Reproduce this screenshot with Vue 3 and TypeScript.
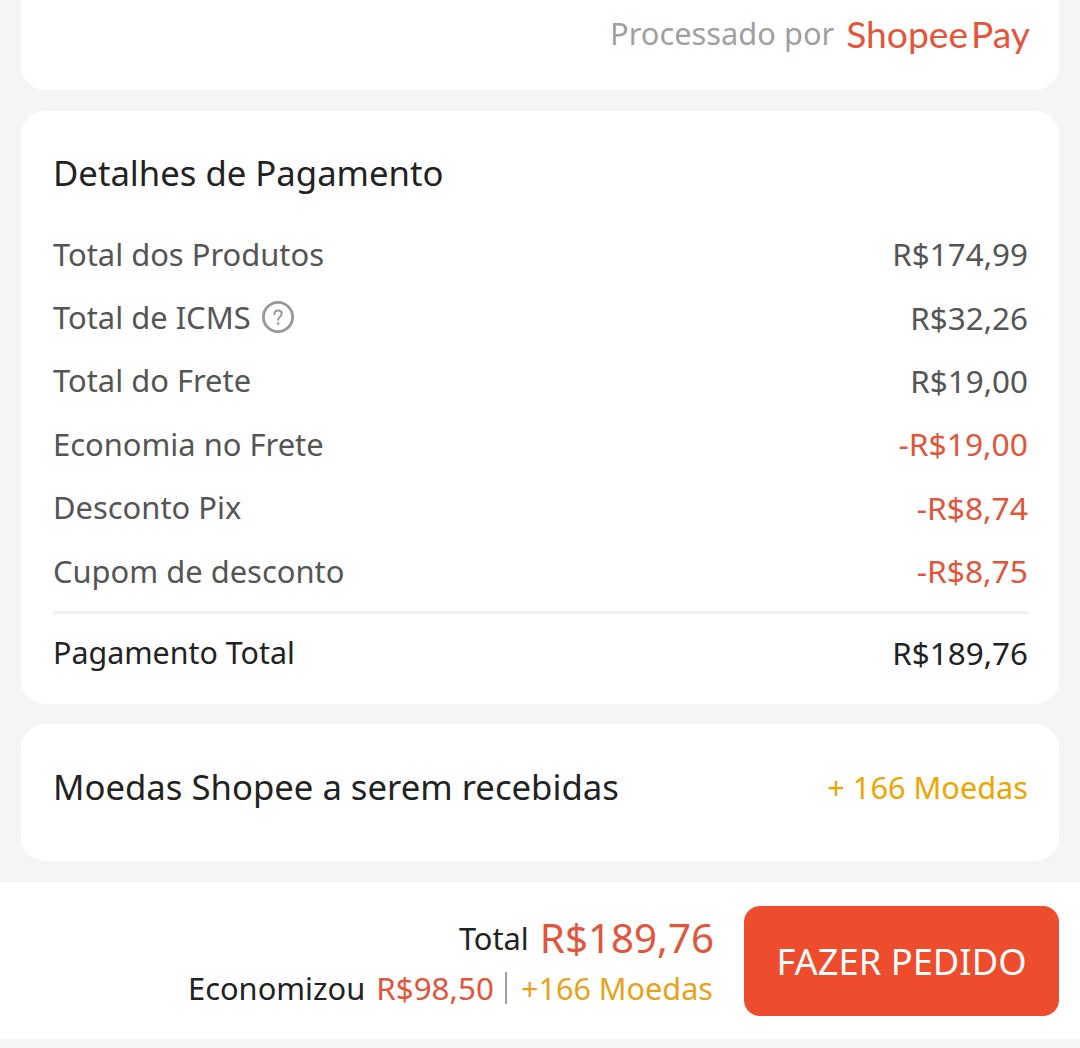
<template>
  <div class="page">
    <section class="card card-top">
      <span class="processed">Processado por</span>
      <span class="brand">Shopee<span class="brand-pay">Pay</span></span>
    </section>

    <section class="card card-details">
      <h2 class="title">Detalhes de Pagamento</h2>
      <div v-for="row in rows" :key="row.label" class="row">
        <span class="row-label">
          {{ row.label }}
          <svg v-if="row.help" class="help" viewBox="0 0 32 32" width="32" height="32" fill="none">
            <circle cx="16" cy="16" r="14.6" stroke="#999" stroke-width="2.8" />
            <path d="M12.4 13.2c0-2.2 1.6-3.6 3.7-3.6s3.6 1.3 3.6 3.2c0 2.9-3.6 2.9-3.6 6" stroke="#999" stroke-width="2" stroke-linecap="round" />
            <circle cx="16.1" cy="22.6" r="1.3" fill="#999" />
          </svg>
        </span>
        <span :class="['row-value', { discount: row.discount }]">{{ row.value }}</span>
      </div>
      <div class="total-row">
        <span>Pagamento Total</span>
        <span>R$189,76</span>
      </div>
    </section>

    <section class="card card-coins">
      <span class="coins-label">Moedas Shopee a serem recebidas</span>
      <span class="coins-value">+ 166 Moedas</span>
    </section>

    <footer class="footer">
      <div class="summary">
        <div class="summary-line">
          <span class="total-label">Total</span>
          <span class="total-price">R$189,76</span>
        </div>
        <div class="summary-line saved">
          <span>Economizou</span>
          <span class="saved-price">R$98,50</span>
          <i class="divider"></i>
          <span class="saved-coins">+166 Moedas</span>
        </div>
      </div>
      <button class="order" type="button">FAZER PEDIDO</button>
    </footer>
  </div>
</template>

<script setup lang="ts">
interface PaymentRow {
  label: string
  value: string
  help?: boolean
  discount?: boolean
}

const rows: PaymentRow[] = [
  { label: 'Total dos Produtos', value: 'R$174,99' },
  { label: 'Total de ICMS', value: 'R$32,26', help: true },
  { label: 'Total do Frete', value: 'R$19,00' },
  { label: 'Economia no Frete', value: '-R$19,00', discount: true },
  { label: 'Desconto Pix', value: '-R$8,74', discount: true },
  { label: 'Cupom de desconto', value: '-R$8,75', discount: true }
]
</script>

<style>
html,
body {
  margin: 0;
  background: #f5f5f5;
}
</style>

<style scoped>
.page {
  height: 1048px;
  overflow: hidden;
  background: #f5f5f5;
  font-family: 'Noto Sans', sans-serif;
  display: flex;
  flex-direction: column;
}

.card {
  margin: 0 21px;
  background: #fff;
  border-radius: 24px;
  box-sizing: border-box;
  padding: 0 31px 0 32px;
}

.card-top {
  height: 90px;
  border-radius: 0 0 24px 24px;
  display: flex;
  justify-content: flex-end;
  align-items: flex-start;
  gap: 12px;
  padding-top: 13px;
  padding-right: 29px;
}

.processed {
  font-size: 30.8px;
  line-height: 40px;
  color: #a0a0a0;
}

.brand {
  margin-top: 1px;
  font-family: Lato, sans-serif;
  font-size: 37.2px;
  line-height: 40px;
  color: #e5553a;
}

.brand-pay {
  margin-left: 3px;
}

.card-details {
  height: 593px;
  margin-top: 21px;
}

.title {
  margin: 0;
  padding-top: 38px;
  height: 111px;
  box-sizing: border-box;
  font-size: 34.7px;
  line-height: 48px;
  font-weight: 400;
  color: #222;
}

.row {
  height: 63.4px;
  display: flex;
  justify-content: space-between;
  align-items: center;
  font-size: 30.9px;
  color: #555;
}

.row-label {
  display: flex;
  align-items: center;
  gap: 11px;
}

.row-value {
  font-size: 31.4px;
}

.help {
  flex: none;
}

.row-value.discount {
  font-size: 31.8px;
  color: #e2553a;
}

.total-row {
  margin-top: 8.5px;
  height: 80px;
  border-top: 3px solid #f0f0f0;
  box-sizing: border-box;
  display: flex;
  justify-content: space-between;
  align-items: center;
  font-size: 30.4px;
  color: #222;
}

.total-row span:last-child {
  font-size: 31.4px;
}

.card-coins {
  height: 137px;
  margin-top: 20px;
  padding-bottom: 12px;
  display: flex;
  justify-content: space-between;
  align-items: center;
}

.coins-label {
  font-size: 34.7px;
  color: #222;
}

.coins-value {
  font-size: 30.7px;
  color: #eda500;
}

.footer {
  height: 158px;
  margin-top: 20px;
  flex: none;
  background: #fff;
  border-top: 1px solid #eee;
  box-sizing: border-box;
  display: flex;
  justify-content: flex-end;
  align-items: center;
  gap: 31px;
  padding: 0 21px;
}

.summary {
  display: flex;
  flex-direction: column;
  align-items: flex-end;
  gap: 2px;
}

.summary-line {
  display: flex;
  align-items: center;
  gap: 11px;
}

.total-label {
  font-size: 30.8px;
  color: #222;
}

.total-price {
  font-size: 40.3px;
  line-height: 52px;
  color: #e2553a;
  margin-right: -1px;
}

.saved {
  font-size: 30.8px;
  line-height: 44px;
  color: #222;
}

.saved-price {
  font-size: 31.4px;
  color: #e2553a;
}

.divider {
  width: 2px;
  height: 32px;
  background: #a0a0a0;
}

.saved-coins {
  font-size: 30.6px;
  margin-left: 3px;
  color: #e8a11a;
}

.order {
  width: 315px;
  height: 110px;
  border: 0;
  border-radius: 16px;
  background: #ee4d2d;
  color: #fff;
  font-family: inherit;
  font-size: 36.3px;
}
</style>
